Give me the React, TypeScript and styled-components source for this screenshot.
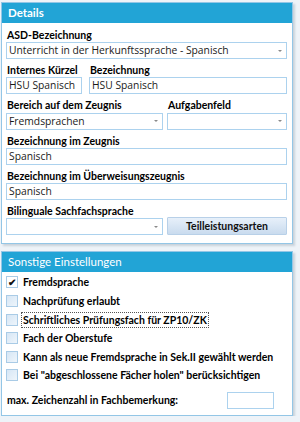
import React from 'react'
import styled, { createGlobalStyle } from 'styled-components'

const GlobalStyle = createGlobalStyle`
  html, body { margin: 0; padding: 0; }
  body {
    background: #eef3f8;
    font-family: Lato, "Open Sans", "Liberation Sans", sans-serif;
    color: #000;
  }
`

const Page = styled.div`
  width: 292px;
  padding: 2px 0 0 1px;
  display: flex;
  flex-direction: column;
  gap: 7px;
`

const Panel = styled.section`
  background: #fff;
  border: 1px solid #93c6e6;
  box-shadow: 2px 2px 2px rgba(90, 110, 130, 0.25);
`

const PanelHead = styled.header<{ $bold?: boolean }>`
  height: 20px;
  line-height: 20px;
  background: #22a4d6;
  color: #fff;
  font-size: 11.5px;
  font-weight: ${p => (p.$bold ? 700 : 400)};
  padding-left: 6px;
`

const FormBody = styled.div`
  padding: 1px 5px 8px 4px;
  display: flex;
  flex-direction: column;
`

const Row = styled.div<{ $gap: number }>`
  display: flex;
  gap: ${p => p.$gap}px;
`

const Field = styled.div<{ $width?: number; $bottom?: boolean }>`
  flex: ${p => (p.$width ? `0 0 ${p.$width}px` : '1 1 0')};
  display: flex;
  flex-direction: column;
  justify-content: ${p => (p.$bottom ? 'flex-end' : 'flex-start')};
  min-width: 0;
`

const Label = styled.label`
  display: block;
  padding: 5px 0 0 1px;
  height: 13.2px;
  line-height: 13px;
  font-size: 10.5px;
  font-weight: 700;
  white-space: nowrap;
`

const Box = styled.div`
  height: 17px;
  box-sizing: border-box;
  border: 1px solid #acd2ee;
  background: #fff;
  font-family: "Open Sans", Lato, sans-serif;
  font-size: 10.3px;
  line-height: 15px;
  padding: 0 2px;
  white-space: nowrap;
  overflow: hidden;
  display: flex;
  align-items: center;
  color: #1a1a1a;
`

const SelectBox = styled(Box)`
  &::after {
    content: '';
    margin-left: auto;
    border-left: 2px solid transparent;
    border-right: 2px solid transparent;
    border-top: 2px solid #8a8a8a;
    margin-right: 2px;
  }
`

const ActionButton = styled.button`
  height: 18px;
  box-sizing: border-box;
  border: 1px solid #b8d0e8;
  border-radius: 1px;
  background: linear-gradient(#e7f0fa, #c9dbee);
  font-family: inherit;
  font-size: 10.5px;
  font-weight: 700;
  color: #111;
  padding: 0;
  cursor: pointer;
`

const Options = styled.div`
  padding: 1px 5px 6px 4px;
  display: flex;
  flex-direction: column;
`

const CheckRow = styled.div`
  height: 18.6px;
  display: flex;
  align-items: center;
  gap: 4px;
  font-size: 10.5px;
  font-weight: 700;
  white-space: nowrap;
`

const Check = styled.span<{ $checked?: boolean }>`
  width: 12px;
  height: 12px;
  box-sizing: border-box;
  border: 1px solid #a9cbe6;
  background: ${p => (p.$checked ? '#fff' : 'linear-gradient(135deg, #d6e6f5, #eef5fb)')};
  display: flex;
  align-items: center;
  justify-content: center;
  font-size: 10px;
  line-height: 1;
  color: #111;
  flex-shrink: 0;
`

const CheckText = styled.span<{ $focused?: boolean }>`
  padding: 0 1px;
  line-height: 14px;
  outline: ${p => (p.$focused ? '1px dotted #555' : 'none')};
`

const NumberRow = styled.div`
  margin-top: 7px;
  display: flex;
  align-items: center;
  justify-content: space-between;
  font-size: 10.5px;
  font-weight: 700;
  padding: 0 13px 0 1px;
`

const SmallInput = styled.div`
  width: 47px;
  height: 17px;
  box-sizing: border-box;
  border: 1px solid #acd2ee;
  background: #fff;
`

const options = [
  { text: 'Fremdsprache', checked: true },
  { text: 'Nachprüfung erlaubt' },
  { text: 'Schriftliches Prüfungsfach für ZP10/ZK', focused: true },
  { text: 'Fach der Oberstufe' },
  { text: 'Kann als neue Fremdsprache in Sek.II gewählt werden' },
  { text: 'Bei "abgeschlossene Fächer holen" berücksichtigen' },
]

export default function App() {
  return (
    <>
      <GlobalStyle />
      <Page>
        <Panel>
          <PanelHead $bold>Details</PanelHead>
          <FormBody>
            <Field>
              <Label>ASD-Bezeichnung</Label>
              <SelectBox>Unterricht in der Herkunftssprache - Spanisch</SelectBox>
            </Field>
            <Row $gap={7}>
              <Field $width={76}>
                <Label>Internes Kürzel</Label>
                <Box>HSU Spanisch</Box>
              </Field>
              <Field>
                <Label>Bezeichnung</Label>
                <Box>HSU Spanisch</Box>
              </Field>
            </Row>
            <Row $gap={4}>
              <Field>
                <Label>Bereich auf dem Zeugnis</Label>
                <SelectBox>Fremdsprachen</SelectBox>
              </Field>
              <Field $width={120}>
                <Label>Aufgabenfeld</Label>
                <SelectBox />
              </Field>
            </Row>
            <Field>
              <Label>Bezeichnung im Zeugnis</Label>
              <Box>Spanisch</Box>
            </Field>
            <Field>
              <Label>Bezeichnung im Überweisungszeugnis</Label>
              <Box>Spanisch</Box>
            </Field>
            <Row $gap={4}>
              <Field>
                <Label>Bilinguale Sachfachsprache</Label>
                <SelectBox />
              </Field>
              <Field $width={120} $bottom>
                <ActionButton>Teilleistungsarten</ActionButton>
              </Field>
            </Row>
          </FormBody>
        </Panel>
        <Panel>
          <PanelHead>Sonstige Einstellungen</PanelHead>
          <Options>
            {options.map(o => (
              <CheckRow key={o.text}>
                <Check $checked={o.checked}>{o.checked ? '✔' : ''}</Check>
                <CheckText $focused={o.focused}>{o.text}</CheckText>
              </CheckRow>
            ))}
            <NumberRow>
              <span>max. Zeichenzahl in Fachbemerkung:</span>
              <SmallInput />
            </NumberRow>
          </Options>
        </Panel>
      </Page>
    </>
  )
}
